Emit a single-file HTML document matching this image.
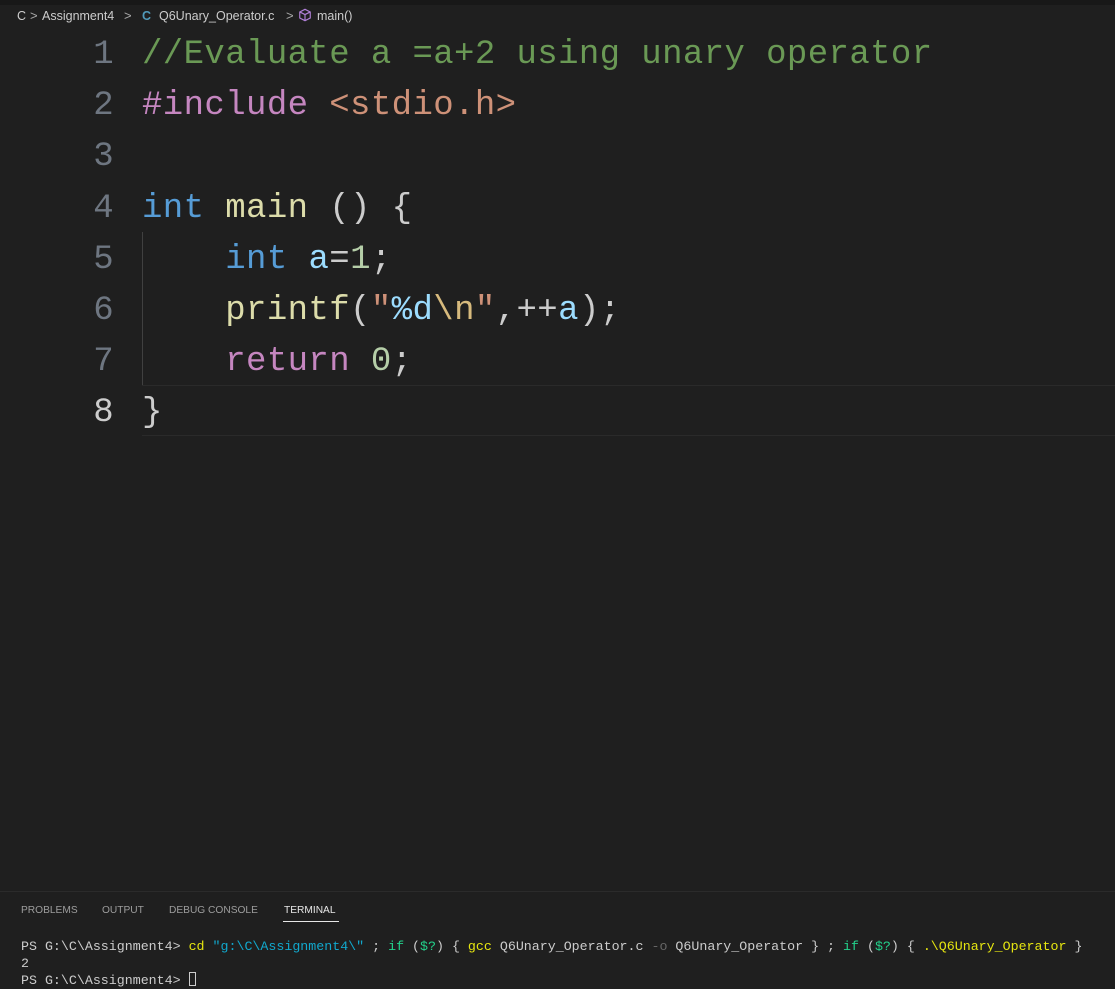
<!DOCTYPE html>
<html><head><style>
body{margin:0;width:1115px;height:978px;background:#1f1f1f;overflow:hidden;position:relative;font-family:"Liberation Sans",sans-serif}
.top{position:absolute;top:0;left:0;width:1115px;height:5px;background:#181818}
.bc{position:absolute;top:9px;font-size:12.5px;color:#cccccc;white-space:nowrap}
.ch{position:absolute;top:8px;font-size:13px;color:#aaa}
.code{position:absolute;left:0;top:30px;font-family:"Liberation Mono",monospace;font-size:34px;letter-spacing:0.4px;white-space:pre}
.ln{position:absolute;left:0;width:114px;text-align:right;color:#6e7681;height:51.2px;line-height:51.2px}
.tx{position:absolute;left:142px;height:51.2px;line-height:51.2px;color:#cccccc}
.c{color:#6a9955}.k{color:#569cd6}.p{color:#c586c0}.s{color:#ce9178}.f{color:#dcdcaa}.v{color:#9cdcfe}.n{color:#b5cea8}.e{color:#d7ba7d}
.term{position:absolute;left:0;top:891px;width:1115px;height:87px;border-top:1px solid #2b2b2b;background:#1f1f1f}
.tab{position:absolute;top:13px;font-size:10.2px;color:#9d9d9d}
.tt{position:absolute;left:21px;font-family:"Liberation Mono",monospace;font-size:13.3px;color:#cccccc;white-space:pre;line-height:17px}
</style></head><body>
<div class="top"></div>
<span class="bc" style="left:17px">C</span>
<span class="ch" style="left:30px">&gt;</span>
<span class="bc" style="left:42px">Assignment4</span>
<span class="ch" style="left:124px">&gt;</span>
<span class="bc" style="left:142px;color:#519aba;font-weight:bold">C</span>
<span class="bc" style="left:159px">Q6Unary_Operator.c</span>
<span class="ch" style="left:286px">&gt;</span>
<svg style="position:absolute;left:298px;top:8px" width="14" height="14" viewBox="0 0 16 16"><path d="M8 1.5l6 3v7l-6 3-6-3v-7zM2 4.5l6 3 6-3M8 7.5v7" fill="none" stroke="#b180d7" stroke-width="1.3"/></svg>
<span class="bc" style="left:317px">main()</span>
<div style="position:absolute;left:142px;top:232px;width:1px;height:153px;background:#404040"></div>
<div style="position:absolute;left:142px;top:385px;width:973px;height:49px;border-top:1px solid #2a2a2a;border-bottom:1px solid #2a2a2a"></div>
<div class="code">
<div class="ln" style="top:0">1</div><div class="tx" style="top:0"><span class="c">//Evaluate a =a+2 using unary operator</span></div>
<div class="ln" style="top:51.2px">2</div><div class="tx" style="top:51.2px"><span class="p">#include</span> <span class="s">&lt;stdio.h&gt;</span></div>
<div class="ln" style="top:102.4px">3</div>
<div class="ln" style="top:153.6px">4</div><div class="tx" style="top:153.6px"><span class="k">int</span> <span class="f">main</span> () {</div>
<div class="ln" style="top:204.8px">5</div><div class="tx" style="top:204.8px">    <span class="k">int</span> <span class="v">a</span>=<span class="n">1</span>;</div>
<div class="ln" style="top:256px">6</div><div class="tx" style="top:256px">    <span class="f">printf</span>(<span class="s">"</span><span class="v">%d</span><span class="e">\n</span><span class="s">"</span>,++<span class="v">a</span>);</div>
<div class="ln" style="top:307.2px">7</div><div class="tx" style="top:307.2px">    <span class="p">return</span> <span class="n">0</span>;</div>
<div class="ln" style="top:358.4px;color:#cccccc">8</div><div class="tx" style="top:358.4px">}</div>
</div>
<div class="term">
<span class="tab" style="left:21px">PROBLEMS</span><span class="tab" style="left:102px">OUTPUT</span><span class="tab" style="left:169px">DEBUG CONSOLE</span><span class="tab" style="left:284px;color:#e7e7e7">TERMINAL</span>
<div style="position:absolute;left:283px;top:29px;width:56px;height:1px;background:#e7e7e7"></div>
<div class="tt" style="top:46px">PS G:\C\Assignment4&gt; <span style="color:#e5e510">cd</span> <span style="color:#11a8cd">"g:\C\Assignment4\"</span> ; <span style="color:#23d18b">if</span> (<span style="color:#23d18b">$?</span>) { <span style="color:#e5e510">gcc</span> Q6Unary_Operator.c <span style="color:#666">-o</span> Q6Unary_Operator } ; <span style="color:#23d18b">if</span> (<span style="color:#23d18b">$?</span>) { <span style="color:#e5e510">.\Q6Unary_Operator</span> }
2
PS G:\C\Assignment4&gt; <span style="display:inline-block;width:7px;height:14px;border:1px solid #ccc;box-sizing:border-box;vertical-align:-2px"></span></div>
</div>
</body></html>
